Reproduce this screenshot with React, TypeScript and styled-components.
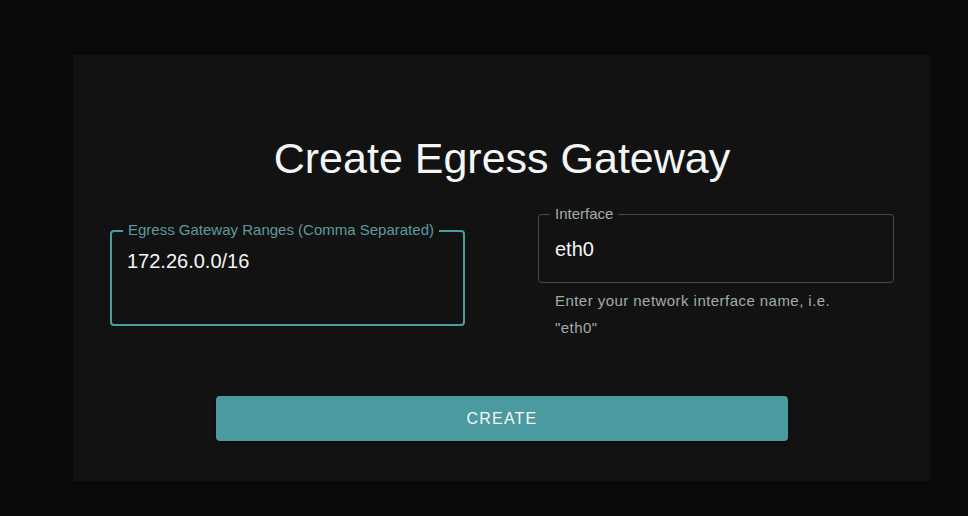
import React from 'react';
import styled, { createGlobalStyle } from 'styled-components';

const GlobalStyle = createGlobalStyle`
  html, body {
    margin: 0;
    padding: 0;
    background: #0a0a0a;
  }
  body {
    font-family: 'Liberation Sans', Arial, sans-serif;
  }
`;

const Page = styled.div`
  min-height: 100vh;
  box-sizing: border-box;
  padding: 55px 37px 35px 73px;
  background: #0a0a0a;
`;

const Panel = styled.div`
  background: #121212;
  border-radius: 2px;
  padding: 133px 37px 40px;
  position: relative;
  display: flex;
  flex-direction: column;
  align-items: center;
`;

const Title = styled.h1`
  position: absolute;
  top: 78px;
  left: 0;
  right: 0;
  margin: 0;
  text-align: center;
  font-size: 43px;
  line-height: 50px;
  font-weight: 400;
  color: #f4f6f6;
`;

const Row = styled.div`
  align-self: stretch;
  margin-top: 26px;
  display: grid;
  grid-template-columns: 355px 356px;
  justify-content: space-between;
  align-items: center;
`;

const Field = styled.div``;

const Box = styled.div<{ $focused?: boolean; $height: number }>`
  position: relative;
  box-sizing: border-box;
  height: ${({ $height }) => $height}px;
  border-radius: 4px;
  border: ${({ $focused }) => ($focused ? '2px solid #4a9ea2' : '1px solid #3b5050')};
  padding: ${({ $focused }) => ($focused ? '17px 15px' : '0 16px')};
  display: flex;
  align-items: ${({ $focused }) => ($focused ? 'flex-start' : 'center')};
`;

const Label = styled.span<{ $focused?: boolean }>`
  position: absolute;
  top: ${({ $focused }) => ($focused ? '-11px' : '-10px')};
  left: ${({ $focused }) => ($focused ? '11px' : '11px')};
  padding: 0 5px;
  background: #121212;
  font-size: 15px;
  line-height: 18px;
  color: ${({ $focused }) => ($focused ? '#5e9a9d' : '#a2acac')};
  white-space: nowrap;
`;

const Value = styled.div`
  font-size: 20px;
  line-height: 24px;
  color: #f4f6f6;
`;

const Helper = styled.p`
  margin: 4px 0 0;
  padding: 0 30px 0 17px;
  font-size: 15px;
  line-height: 27px;
  letter-spacing: 0.45px;
  color: #a3acac;
`;

const Button = styled.button`
  margin-top: 55px;
  width: 572px;
  height: 45px;
  border: none;
  border-radius: 4px;
  background: #4b9a9f;
  box-shadow: 0 2px 3px rgba(0, 0, 0, 0.45);
  color: #f6f8f8;
  font-family: 'Liberation Sans', Arial, sans-serif;
  font-size: 16px;
  letter-spacing: 1.2px;
  text-transform: uppercase;
  cursor: pointer;
`;

export default function App() {
  return (
    <Page>
      <GlobalStyle />
      <Panel>
        <Title>Create Egress Gateway</Title>
        <Row>
          <Field>
            <Box $focused $height={96}>
              <Label $focused>Egress Gateway Ranges (Comma Separated)</Label>
              <Value>172.26.0.0/16</Value>
            </Box>
          </Field>
          <Field>
            <Box $height={69}>
              <Label>Interface</Label>
              <Value>eth0</Value>
            </Box>
            <Helper>Enter your network interface name, i.e. "eth0"</Helper>
          </Field>
        </Row>
        <Button>Create</Button>
      </Panel>
    </Page>
  );
}
